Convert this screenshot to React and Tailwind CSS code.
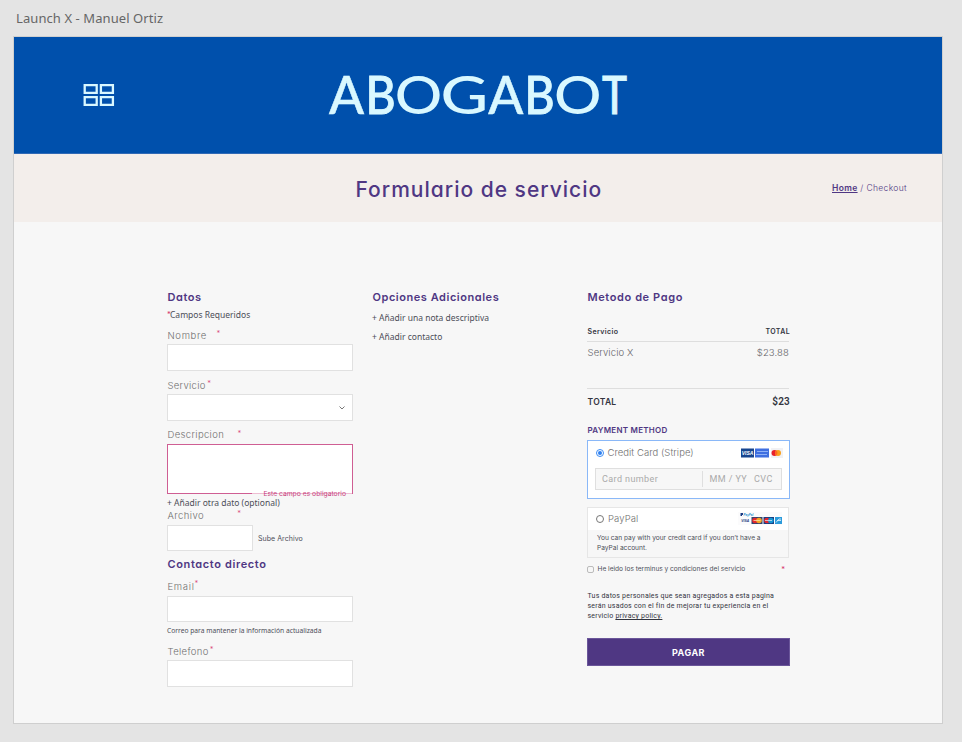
const Star = ({ className = "" }) => (
  <span className={`font-['Inter'] text-[7.5px] leading-[9px] tracking-normal text-[#d6336c] ${className}`}>*</span>
);

const Heading = ({ children, className = "" }) => (
  <h2 className={`h-[14px] whitespace-nowrap pl-[0.5px] font-['Inter'] text-[11px] font-semibold leading-[14px] tracking-[0.54px] text-[#4f3783] [font-feature-settings:'cv11'] ${className}`}>
    {children}
  </h2>
);

const Label = ({ children, className = "", gap = "ml-px" }) => (
  <div className={`flex h-[14px] whitespace-nowrap pl-[0.5px] font-['Inter'] text-[9.5px] font-light leading-[13px] text-[#6f6f6f] ${className}`}>
    <label>{children}</label>
    <Star className={gap} />
  </div>
);

const Field = ({ className = "", children }) => (
  <div className={`border border-[#e1e1e1] bg-white ${className}`}>{children}</div>
);

const note = "whitespace-nowrap font-['Noto_Sans'] text-[8.5px] leading-[14px] text-[#4c4e57]";

// letter, left edge, horizontal stretch, outline weight
const LOGO = [
  ["A", 329, 1, 0.5],
  ["B", 365.5, 0.9, 0.9],
  ["O", 394.8, 1.15, 0],
  ["G", 440.6, 1.27, 0],
  ["A", 488.2, 1, 0.5],
  ["B", 524.5, 0.9, 0.9],
  ["O", 554, 1.15, 0],
  ["T", 602, 0.82, 0.9],
];

const StripeCards = () => (
  <svg width="42" height="10" viewBox="0 0 42 10">
    <rect width="13" height="9" y=".5" fill="#17458f" />
    <text x="6.5" y="7" textAnchor="middle" fontSize="5" fontWeight="700" fontStyle="italic" fontFamily="Liberation Sans" fill="#fff">VISA</text>
    <rect x="14" y=".5" width="14" height="9" fill="#3f6fe0" />
    <path d="M16 3.500h11M15 6.500h11" stroke="#8fb0f6" strokeWidth="1" />
    <rect x="30" y="0" width="12" height="10" fill="#f1f1f4" />
    <circle cx="33.500" cy="5" r="3" fill="#e8202b" />
    <circle cx="37" cy="5" r="3" fill="#f9a01b" />
    <path d="M35.250 2.600a3 3 0 0 1 0 4.800a3 3 0 0 1 0-4.800" fill="#ff6420" />
  </svg>
);

const PaypalCards = () => (
  <svg className="-mt-px" width="44" height="13" viewBox="0 0 44 13">
    <rect width="44" height="13" fill="#fbfbfc" />
    <path d="M2.500 1h2.500v2h-1v1h-1.500z" fill="#173a83" />
    <text x="5.5" y="4" fontSize="3" fontWeight="700" fontStyle="italic" fontFamily="Liberation Sans" fill="#2790cf">PayPal</text>
    <text x="3.200" y="9.800" fontSize="3.400" fontWeight="700" fontStyle="italic" fontFamily="Liberation Sans" fill="#20377d">VISA</text>
    <rect x="13.500" y="5" width="11" height="7" fill="#33446f" />
    <circle cx="17" cy="8.500" r="2.800" fill="#e5272d" />
    <circle cx="21" cy="8.500" r="2.800" fill="#f5a623" />
    <path d="M15.500 8.500h7" stroke="#fbdca0" strokeWidth=".8" />
    <rect x="25.500" y="5" width="10.500" height="7" fill="#183f83" />
    <circle cx="29" cy="8.500" r="2.800" fill="#e5272d" />
    <circle cx="32.800" cy="8.500" r="2.800" fill="#1597d5" />
    <path d="M27 8.500h7" stroke="#d8dfee" strokeWidth=".8" />
    <rect x="37" y="5" width="7" height="7" fill="#2c9bdb" />
    <path d="M38 10.500l3-3.500h2M39 8.500h4" stroke="#d4eefb" strokeWidth=".9" fill="none" />
  </svg>
);

function Datos() {
  return (
    <section className="w-[205px]">
      <Heading>Datos</Heading>
      <div className={`mt-1 flex h-[14px] ${note}`}>
        <Star className="mt-[2px] w-[3px]" />Campos Requeridos
      </div>
      <Label className="mt-[7px] tracking-[0.65px]" gap="ml-[9.5px]">Nombre</Label>
      <Field className="mt-px h-[27px] w-[186px]" />
      <Label className="mt-2 tracking-[0.3px]" gap="ml-[1.5px]">Servicio</Label>
      <Field className="mt-px flex h-[27px] w-[186px] items-center justify-end pr-[7px]">
        <svg width="6" height="4" viewBox="0 0 6 4" fill="none" stroke="#777" strokeWidth="1"><path d="M.5.5L3 3L5.500.5" /></svg>
      </Field>
      <Label className="mt-[7px] tracking-[0.35px]" gap="ml-[13.5px] mt-px">Descripcion</Label>
      <div className="relative mt-[2px] h-[50px] w-[186px] border border-[#cf5e93] bg-white">
        <div className="absolute -bottom-px left-[84px] h-px w-[100px] bg-[#eebdd2]" />
        <div className="absolute -bottom-[6px] right-[6px] whitespace-nowrap font-['Inter'] text-[6.75px] leading-[10px] text-[#c9447f]">Este campo es obligatorio</div>
      </div>
      <div className={`mt-[2px] h-[13px] ${note}`}>+ Añadir otra dato (optional)</div>
      <Label className="tracking-[0.45px]" gap="ml-[33px]">Archivo</Label>
      <div className="mt-[2px] flex h-[26px] items-center">
        <Field className="h-[26px] w-[86px]" />
        <span className="ml-[5px] pt-[2px] font-['Inter'] text-[7px] leading-[10px] tracking-[0.05px] text-[#4c4e57]">Sube Archivo</span>
      </div>
      <Heading className="mt-[6px] !tracking-[0.62px]">Contacto directo</Heading>
      <Label className="mt-[9px] tracking-[0.7px]" gap="-mt-px">Email</Label>
      <Field className="mt-[2px] h-[26px] w-[186px]" />
      <div className="mt-[2px] h-[14px] whitespace-nowrap font-['Noto_Sans'] text-[6.7px] leading-[14px] text-[#4c4e57]">Correo para mantener la información actualizada</div>
      <Label className="mt-[7px] tracking-[0.35px]" gap="ml-px">Telefono</Label>
      <Field className="mt-px h-[27px] w-[186px]" />
    </section>
  );
}

function Opciones() {
  return (
    <section className="w-[215px]">
      <Heading>Opciones Adicionales</Heading>
      <div className={`mt-[7px] h-[14px] ${note}`}>+ Añadir una nota descriptiva</div>
      <div className={`mt-[5px] h-[14px] ${note}`}>+ Añadir contacto</div>
    </section>
  );
}

function Pago() {
  return (
    <section className="w-[203px] font-['Inter']">
      <Heading className="!tracking-[0.6px]">Metodo de Pago</Heading>
      <div className="mt-[21px] flex h-[13px] w-[203px] justify-between pl-[0.5px] text-[7px] font-semibold leading-[13px] tracking-[0.4px] text-[#33353f]">
        <span>Servicio</span><span>TOTAL</span>
      </div>
      <div className="mt-[3px] h-px w-[202px] bg-[#dedede]" />
      <div className="mt-1 flex h-[14px] w-[202px] justify-between pl-[0.5px] text-[9.5px] font-light leading-[13px] tracking-[0.13px] text-[#65656a]">
        <span>Servicio X</span><span>$23.88</span>
      </div>
      <div className="mt-[28px] h-px w-[202px] bg-[#dedede]" />
      <div className="mt-[6px] flex h-[14px] justify-between pl-[0.5px] text-[8.5px] font-semibold leading-[14px] text-[#33353f]">
        <span className="tracking-[0.3px]">TOTAL</span><span className="font-['Roboto'] text-[10px] tracking-[0.2px]">$23</span>
      </div>
      <div className="mt-[14px] h-[14px] pl-[0.5px] text-[8px] font-semibold leading-[14px] tracking-[0.25px] text-[#4f3783]">PAYMENT METHOD</div>
      <div className="mt-[3px] h-[59px] border border-[#8ab8f8] bg-white px-[7px] pt-[5px]">
        <div className="flex h-[14px] items-center pl-px">
          <span className="flex size-[8px] items-center justify-center rounded-full border border-[#3b8cf5]"><span className="size-[4px] rounded-full bg-[#2f80f0]" /></span>
          <span className="-mt-px ml-[3.5px] flex-1 whitespace-nowrap text-[9.5px] font-light leading-[13px] tracking-[0.05px] text-[#6f6f6f]">Credit Card (Stripe)</span>
          <div className="-mr-px"><StripeCards /></div>
        </div>
        <div className="mt-[8px] flex h-[22px] items-center border border-[#dfdfdf] bg-[#f7f7f7] pl-[6px] font-['Roboto'] text-[9px] tracking-[0.4px] text-[#aaa]">
          <span className="w-[100px] pt-px">Card number</span>
          <span className="h-[16px] w-px bg-[#dfdfdf]" />
          <span className="ml-[6.5px] whitespace-nowrap pt-px">MM / YY</span>
          <span className="ml-[7px] pt-px">CVC</span>
        </div>
      </div>
      <div className="mt-2 h-[51px] w-[202px] border border-[#e6e6e6]">
        <div className="flex h-[22px] items-center bg-white pl-[8px] pr-[6px]">
          <span className="size-[8px] rounded-full border border-[#777]" />
          <span className="-mt-px ml-[4px] flex-1 text-[9.5px] font-light leading-[14px] tracking-[0.1px] text-[#6f6f6f]">PayPal</span>
          <PaypalCards />
        </div>
        <p className="whitespace-nowrap pl-[9px] pt-[3px] text-[6.6px] leading-[10px] text-[#4c4e57]">You can pay with your credit card if you don’t have a<br />PayPal account.</p>
      </div>
      <div className="mt-[4px] flex h-[14px] items-center">
        <span className="size-[7px] rounded-[2px] border border-[#bbb]" />
        <span className="ml-[3.5px] flex-1 whitespace-nowrap text-[6.57px] leading-[14px] text-[#4c4e57]">He leido los terminus y condiciones del servicio</span>
        <Star className="mr-[5px]" />
      </div>
      <p className="mt-[15px] whitespace-nowrap pl-[0.5px] font-['Roboto'] text-[7px] leading-[10px] tracking-[0.22px] text-[#33353f]">
        Tus datos personales que sean agregados a esta pagina<br />serán usados con el fin de mejorar tu experiencia en el<br />servicio <span className="underline">privacy policy.</span>
      </p>
      <button className="mt-[17px] flex h-[28px] w-full items-center justify-center border border-[#6b569a] bg-[#4f3783] pt-px text-[9px] font-bold tracking-[0.5px] text-white">PAGAR</button>
    </section>
  );
}

export default function App() {
  return (
    <div className="h-[742px] w-[962px] overflow-hidden bg-[#e4e4e4] pl-[13px]">
      <div className="h-[36px] pl-[3px] font-['Noto_Sans'] text-[13px] leading-[37px] tracking-[0.08px] text-[#666]">Launch X - Manuel Ortiz</div>
      <main className="h-[688px] w-[930px] border border-[#cfcfcf] bg-[#f7f7f7]">
        <header className="flex h-[117px] border-b border-[#3069b5] bg-[#0050ac] pl-[69px]">
          <svg className="mt-[47px]" width="32" height="22" viewBox="0 0 32 22" fill="none" stroke="#d9f8ff" strokeWidth="2.3">
            <path d="M1.700 1.150h12v7.700h-12zM17.900 1.150h12v7.700h-12zM1.700 13.150h12v7.700h-12zM17.900 13.150h12v7.700h-12z" />
          </svg>
          <svg className="ml-[211px] mt-[23px]" width="304" height="72" viewBox="326 60 304 72" fontFamily="Lato" fontSize="51.500" fontWeight="500" fill="#d9f8ff" stroke="#d9f8ff">
            {LOGO.map(([letter, x, stretch, outline], i) => (
              <text key={i} strokeWidth={outline} transform={`translate(${x} 114) scale(${stretch} 1)`}>{letter}</text>
            ))}
          </svg>
        </header>
        <div className="flex h-[68px] items-center bg-[#f3eeeb] pl-[341.5px] font-['Inter'] text-[#4f3783] [font-feature-settings:'cv11']">
          <h1 className="w-[476.5px] whitespace-nowrap pt-[3px] text-[21px] font-medium tracking-[1px]">Formulario de servicio</h1>
          <nav className="whitespace-nowrap text-[8.5px] tracking-[0.35px]"><span className="font-semibold underline">Home</span><span className="font-light"> / Checkout</span></nav>
        </div>
        <div className="flex pl-[153px] pt-[68px]">
          <Datos />
          <Opciones />
          <Pago />
        </div>
      </main>
    </div>
  );
}
